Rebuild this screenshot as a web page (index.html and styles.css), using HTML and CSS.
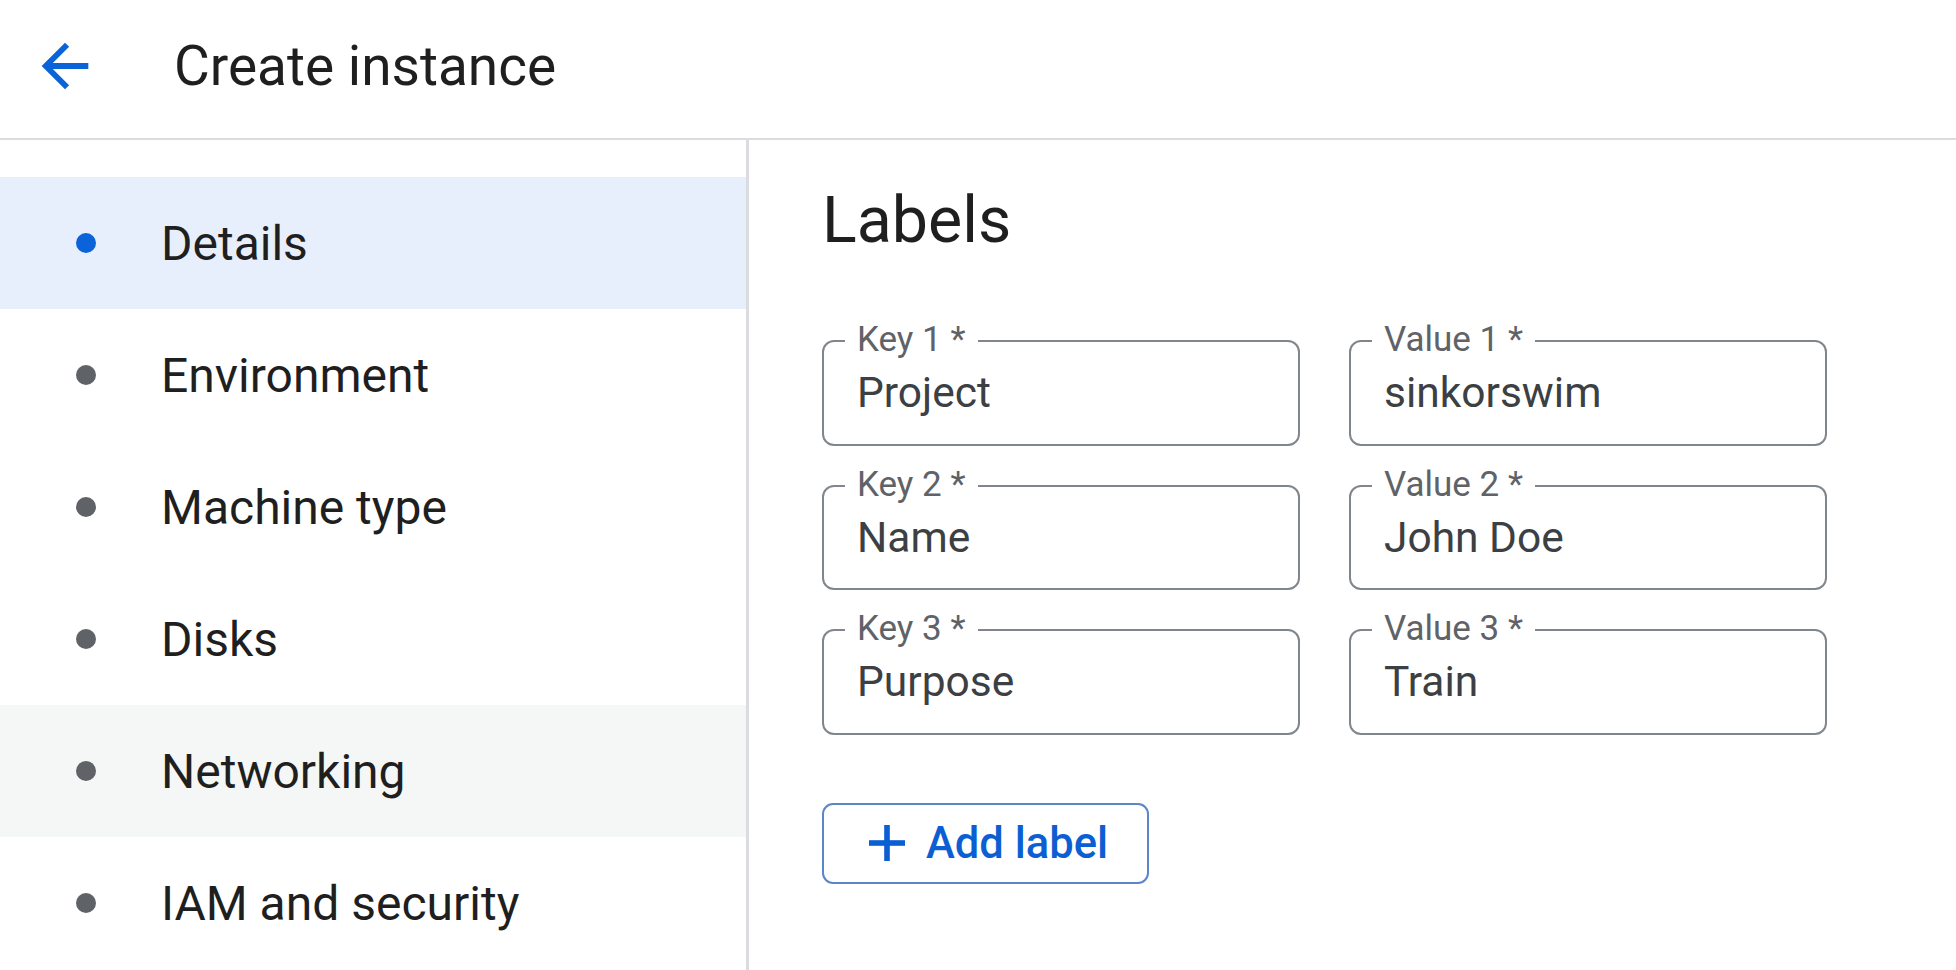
FILE: index.html
```html
<!DOCTYPE html>
<html lang="en">
<head>
<meta charset="utf-8">
<title>Create instance</title>
<link rel="stylesheet" href="styles.css">
</head>
<body>
<header class="topbar">
  <button class="back-btn" aria-label="Back">
    <svg class="back-icon" viewBox="0 0 24 24" width="70" height="70"><path d="M20 11H7.83l5.59-5.59L12 4l-8 8 8 8 1.41-1.41L7.83 13H20v-2z"/></svg>
  </button>
  <h1 class="title">Create instance</h1>
</header>
<div class="layout">
  <nav class="sidebar">
    <a class="nav-item active"><span class="dot"></span><span class="nav-label">Details</span></a>
    <a class="nav-item"><span class="dot"></span><span class="nav-label">Environment</span></a>
    <a class="nav-item"><span class="dot"></span><span class="nav-label">Machine type</span></a>
    <a class="nav-item"><span class="dot"></span><span class="nav-label">Disks</span></a>
    <a class="nav-item hover"><span class="dot"></span><span class="nav-label">Networking</span></a>
    <a class="nav-item"><span class="dot"></span><span class="nav-label">IAM and security</span></a>
  </nav>
  <main class="content">
    <h2 class="section-title">Labels</h2>
    <div class="label-grid">
      <div class="field"><span class="field-label">Key 1 *</span><span class="field-value">Project</span></div>
      <div class="field"><span class="field-label">Value 1 *</span><span class="field-value">sinkorswim</span></div>
      <div class="field"><span class="field-label">Key 2 *</span><span class="field-value">Name</span></div>
      <div class="field"><span class="field-label">Value 2 *</span><span class="field-value">John Doe</span></div>
      <div class="field"><span class="field-label">Key 3 *</span><span class="field-value">Purpose</span></div>
      <div class="field"><span class="field-label">Value 3 *</span><span class="field-value">Train</span></div>
    </div>
    <button class="add-btn">
      <svg class="add-icon" viewBox="0 0 36 36" width="36" height="36"><rect x="15.2" y="0" width="5.6" height="36"/><rect x="0" y="15.2" width="36" height="5.6"/></svg>
      <span>Add label</span>
    </button>
  </main>
</div>
</body>
</html>
```

FILE: styles.css
```css
* { box-sizing: border-box; }

html, body {
  margin: 0;
  padding: 0;
  background: #ffffff;
  font-family: Roboto, "Noto Sans", "Liberation Sans", sans-serif;
  color: #1f1f1f;
  overflow: hidden;
}

.topbar {
  height: 140px;
  display: flex;
  align-items: center;
  padding: 0 0 6px 30px;
  border-bottom: 2px solid #dadce0;
}

.back-btn {
  border: 0;
  padding: 0;
  margin: 0;
  background: none;
  width: 70px;
  height: 70px;
  display: flex;
}

.back-icon { fill: #0b63d9; }

.title {
  margin: 0 0 0 74px;
  font-size: 55px;
  font-weight: 400;
  line-height: 1;
  color: #1f1f1f;
}

.layout {
  display: flex;
  height: 830px;
}

.sidebar {
  width: 749px;
  flex: none;
  border-right: 3px solid #dadce0;
  padding-top: 37px;
  display: flex;
  flex-direction: column;
}

.nav-item {
  height: 132px;
  flex: none;
  display: flex;
  align-items: center;
  padding-left: 76px;
  gap: 65px;
  font-size: 48px;
  color: #1f1f1f;
}

.nav-item.active { background: #e8effc; }
.nav-item.hover { background: #f5f7f7; }

.dot {
  width: 20px;
  height: 20px;
  border-radius: 50%;
  background: #5f6368;
  flex: none;
}

.nav-item.active .dot { background: #0b63d9; }

.content {
  flex: 1;
  padding: 49px 0 0 73px;
}

.section-title {
  margin: 0 0 88px 0;
  font-size: 64.5px;
  font-weight: 400;
  line-height: 63px;
  color: #1f1f1f;
}

.label-grid {
  display: grid;
  grid-template-columns: 478px 478px;
  grid-auto-rows: 105.5px;
  column-gap: 49px;
  row-gap: 39px;
}

.field {
  position: relative;
  border: 2px solid #80868b;
  border-radius: 12px;
  display: flex;
  align-items: center;
  padding-left: 33px;
}

.field-label {
  position: absolute;
  left: 21px;
  top: -22px;
  padding: 0 12px;
  background: #ffffff;
  font-size: 35px;
  line-height: 40px;
  color: #5f6368;
}

.field-value {
  font-size: 42.5px;
  color: #3c4043;
}

.add-btn {
  margin-top: 68px;
  width: 327px;
  height: 81px;
  border: 2px solid #5b87c7;
  border-radius: 11px;
  background: #ffffff;
  display: flex;
  align-items: center;
  gap: 21px;
  padding: 0 0 0 45px;
  font-family: Roboto, "Noto Sans", "Liberation Sans", sans-serif;
  font-size: 43.5px;
  font-weight: 500;
  color: #0b5fd3;
}

.add-icon { fill: #0b5fd3; flex: none; }
```
